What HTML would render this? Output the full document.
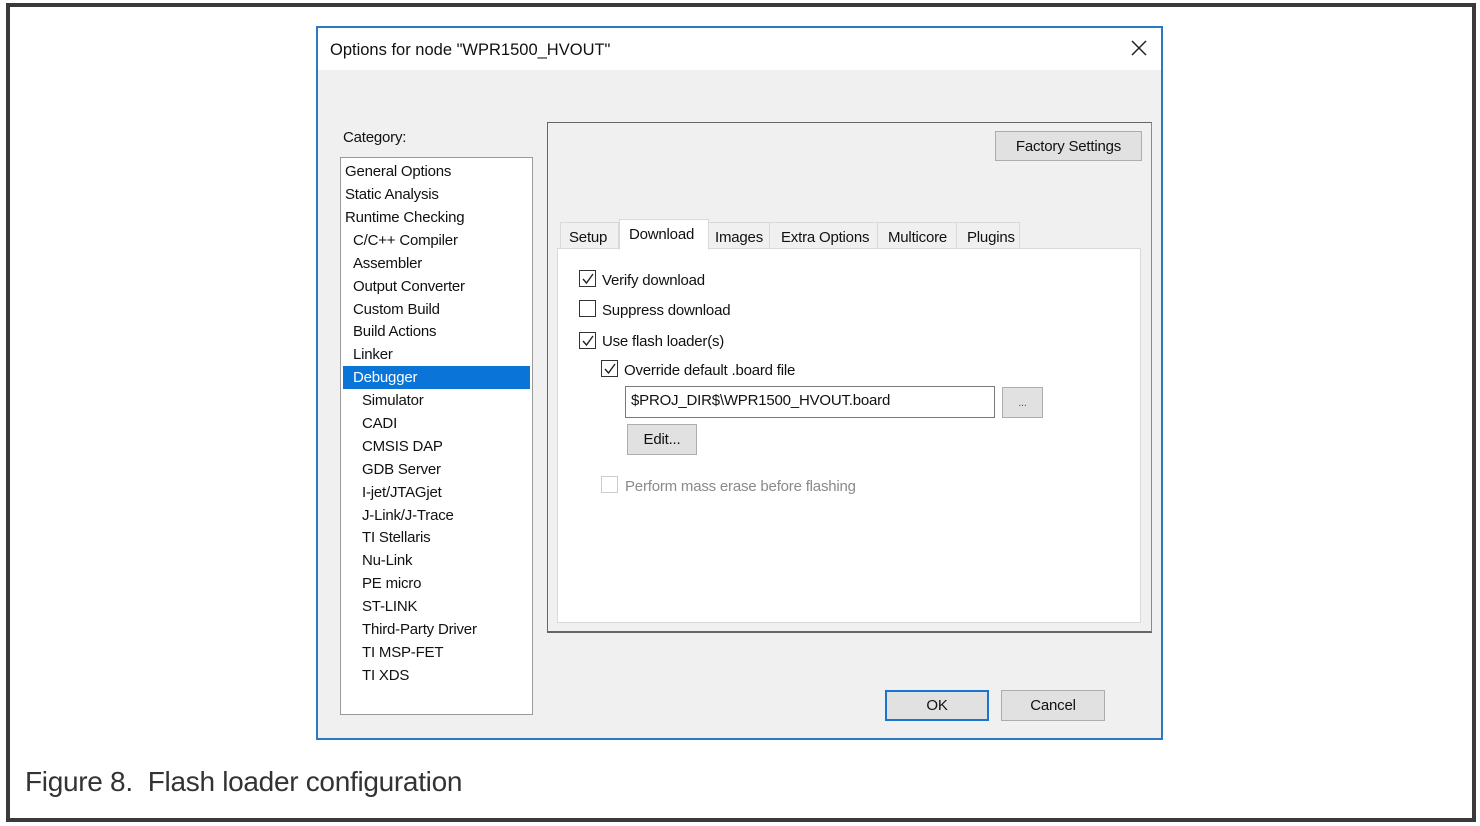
<!DOCTYPE html>
<html><head><meta charset="utf-8"><style>
*{margin:0;padding:0;box-sizing:border-box}
body{width:1480px;height:826px;background:#fff;position:relative;overflow:hidden;font-family:"Liberation Sans",sans-serif;color:#111}
.a{position:absolute}
.t{position:absolute;font-size:15px;white-space:nowrap;line-height:18px;letter-spacing:-0.2px;margin-top:1px}
.btn{position:absolute;background:#e1e1e1;border:1px solid #adadad;font-size:15px;text-align:center;letter-spacing:-0.2px}
.cb{position:absolute;width:17px;height:17px;border:1px solid #333;background:#fff}
.cb svg{position:absolute;left:1px;top:1px}
</style></head><body>
<div class="a" style="left:6px;top:3px;width:1470px;height:819px;border:4px solid #3a3a3a"></div>
<div class="a" style="left:316px;top:26px;width:847px;height:714px;border:2px solid #2b79c5;background:#f0f0f0"></div>
<div class="a" style="left:318px;top:28px;width:843px;height:42px;background:#fff"></div>
<div class="t" style="left:330px;top:40px;font-size:16.5px;letter-spacing:0">Options for node "WPR1500_HVOUT"</div>
<svg class="a" style="left:1131px;top:40px" width="16" height="16"><path d="M1 1L15 15M15 1L1 15" stroke="#222" stroke-width="1.5"/></svg>
<div class="t" style="left:343px;top:128px">Category:</div>
<div class="a" style="left:340px;top:157px;width:193px;height:558px;background:#fff;border:1px solid #9a9a9a"></div>
<div class="a" style="left:343px;top:366px;width:187px;height:23px;background:#0a74d8"></div>
<div class="t" style="left:345px;top:162px">General Options</div>
<div class="t" style="left:345px;top:185px">Static Analysis</div>
<div class="t" style="left:345px;top:208px">Runtime Checking</div>
<div class="t" style="left:353px;top:231px">C/C++ Compiler</div>
<div class="t" style="left:353px;top:254px">Assembler</div>
<div class="t" style="left:353px;top:277px">Output Converter</div>
<div class="t" style="left:353px;top:300px">Custom Build</div>
<div class="t" style="left:353px;top:322px">Build Actions</div>
<div class="t" style="left:353px;top:345px">Linker</div>
<div class="t" style="left:353px;top:368px;color:#fff">Debugger</div>
<div class="t" style="left:362px;top:391px">Simulator</div>
<div class="t" style="left:362px;top:414px">CADI</div>
<div class="t" style="left:362px;top:437px">CMSIS DAP</div>
<div class="t" style="left:362px;top:460px">GDB Server</div>
<div class="t" style="left:362px;top:483px">I-jet/JTAGjet</div>
<div class="t" style="left:362px;top:506px">J-Link/J-Trace</div>
<div class="t" style="left:362px;top:528px">TI Stellaris</div>
<div class="t" style="left:362px;top:551px">Nu-Link</div>
<div class="t" style="left:362px;top:574px">PE micro</div>
<div class="t" style="left:362px;top:597px">ST-LINK</div>
<div class="t" style="left:362px;top:620px">Third-Party Driver</div>
<div class="t" style="left:362px;top:643px">TI MSP-FET</div>
<div class="t" style="left:362px;top:666px">TI XDS</div>

<div class="a" style="left:547px;top:122px;width:605px;height:511px;border:1px solid #666;border-right-color:#888;border-bottom:2px solid #666"></div>
<div class="btn" style="left:995px;top:131px;width:147px;height:30px;line-height:29px">Factory Settings</div>

<div class="a" style="left:557px;top:248px;width:584px;height:375px;background:#fff;border:1px solid #d9d9d9"></div>
<div class="a" style="left:560px;top:222px;width:59px;height:27px;border:1px solid #d9d9d9;border-bottom:none"></div>
<div class="t" style="left:569px;top:228px">Setup</div>
<div class="a" style="left:619px;top:219px;width:90px;height:31px;background:#fff;border:1px solid #d9d9d9;border-bottom:none"></div>
<div class="t" style="left:629px;top:225px">Download</div>
<div class="a" style="left:709px;top:222px;width:61px;height:27px;border:1px solid #d9d9d9;border-bottom:none;border-left:none"></div>
<div class="t" style="left:715px;top:228px">Images</div>
<div class="a" style="left:770px;top:222px;width:108px;height:27px;border:1px solid #d9d9d9;border-bottom:none;border-left:none"></div>
<div class="t" style="left:781px;top:228px">Extra Options</div>
<div class="a" style="left:878px;top:222px;width:79px;height:27px;border:1px solid #d9d9d9;border-bottom:none;border-left:none"></div>
<div class="t" style="left:888px;top:228px">Multicore</div>
<div class="a" style="left:957px;top:222px;width:63px;height:27px;border:1px solid #d9d9d9;border-bottom:none;border-left:none"></div>
<div class="t" style="left:967px;top:228px">Plugins</div>

<div class="cb" style="left:579px;top:270px"><svg width="14" height="14"><path d="M2 7L5.5 11L12 2" stroke="#222" stroke-width="1.4" fill="none"/></svg></div>
<div class="t" style="left:602px;top:271px">Verify download</div>
<div class="cb" style="left:579px;top:300px"></div>
<div class="t" style="left:602px;top:301px">Suppress download</div>
<div class="cb" style="left:579px;top:332px"><svg width="14" height="14"><path d="M2 7L5.5 11L12 2" stroke="#222" stroke-width="1.4" fill="none"/></svg></div>
<div class="t" style="left:602px;top:332px">Use flash loader(s)</div>
<div class="cb" style="left:601px;top:360px"><svg width="14" height="14"><path d="M2 7L5.5 11L12 2" stroke="#222" stroke-width="1.4" fill="none"/></svg></div>
<div class="t" style="left:624px;top:361px">Override default .board file</div>
<div class="a" style="left:625px;top:386px;width:370px;height:32px;border:1px solid #7a7a7a;background:#fff"></div>
<div class="t" style="left:631px;top:391px">$PROJ_DIR$\WPR1500_HVOUT.board</div>
<div class="btn" style="left:1002px;top:387px;width:41px;height:31px;line-height:30px;font-size:11px;color:#555">...</div>
<div class="btn" style="left:627px;top:424px;width:70px;height:31px;line-height:30px">Edit...</div>
<div class="cb" style="left:601px;top:476px;border-color:#ccc"></div>
<div class="t" style="left:625px;top:477px;color:#8a8a8a">Perform mass erase before flashing</div>

<div class="btn" style="left:885px;top:690px;width:104px;height:31px;line-height:28px;border:2px solid #1a74d0">OK</div>
<div class="btn" style="left:1001px;top:690px;width:104px;height:31px;line-height:30px">Cancel</div>

<div class="t" style="left:25px;top:764px;font-size:28px;line-height:34px;letter-spacing:-0.3px;color:#333">Figure 8.&nbsp; Flash loader configuration</div>
</body></html>
